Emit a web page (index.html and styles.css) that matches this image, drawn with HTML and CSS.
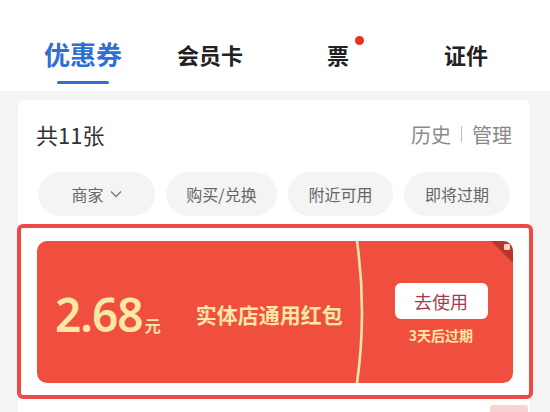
FILE: index.html
```html
<!DOCTYPE html>
<html lang="zh-CN">
<head>
    <meta charset="UTF-8">
    <meta name="viewport" content="width=device-width, initial-scale=1.0">
    <title>卡包</title>
    <link rel="stylesheet" href="styles.css">
</head>
<body>

    <!-- Top tabs -->
    <div class="tabs">
        <div class="tab active">优惠券</div>
        <div class="tab tab-member">会员卡</div>
        <div class="tab tab-ticket">票<span class="dot"></span></div>
        <div class="tab tab-cert">证件</div>
    </div>

    <div class="panel">
        <div class="panel-head">
            <div class="count">共11张</div>
            <div class="links">历史<span class="sep"></span>管理</div>
        </div>

        <div class="chips">
            <div class="chip chip-shop">商家
                <svg class="caret" width="12" height="8" viewBox="0 0 12 8"><path d="M1 1.5 L6 6.5 L11 1.5" fill="none" stroke="#777" stroke-width="1.3"/></svg>
            </div>
            <div class="chip chip-buy">购买/兑换</div>
            <div class="chip chip-near">附近可用</div>
            <div class="chip chip-exp">即将过期</div>
        </div>

        <!-- highlighted coupon -->
        <div class="mark">
            <div class="coupon">
                <div class="coupon-main">
                    <div class="amount">2.68<span class="unit">元</span></div>
                    <div class="coupon-name">实体店通用红包</div>
                </div>
                <svg class="cut" width="14" height="142" viewBox="0 0 14 142">
                    <path d="M2 0 Q12 71 2 142" fill="none" stroke="#fbe7a6" stroke-width="2.6"/>
                </svg>
                <div class="coupon-side">
                    <div class="use-btn">去使用</div>
                    <div class="expire">3天后过期</div>
                </div>
                <div class="corner">
                    <svg width="8" height="8" viewBox="0 0 8 8"><rect x="1" y="1" width="6" height="6" rx="1" fill="#f6d6c8"/></svg>
                </div>
            </div>
        </div>
    </div>

    <div class="peek"></div>

</body>
</html>
```

FILE: styles.css
```css
body {
    margin: 0;
    width: 550px;
    height: 412px;
    overflow: hidden;
    background-color: #f4f4f4;
    font-family: "Noto Sans CJK SC", "Noto Sans", sans-serif;
}

.tabs {
    display: flex;
    align-items: flex-start;
    height: 91px;
    box-sizing: border-box;
    padding-top: 39px;
    background-color: #fff;
    position: relative;
}

.tab {
    position: relative;
    font-size: 22px;
    font-weight: bold;
    color: #222;
    line-height: 30px;
}

.tab.active {
    margin-left: 44px;
    font-size: 26px;
    color: #2f6fd3;
}

.tab.active::after {
    content: "";
    position: absolute;
    left: 13px;
    right: 13px;
    bottom: -15px;
    height: 3px;
    border-radius: 2px;
    background-color: #2f6fd3;
}

.tab-member {
    margin-left: 55px;
}

.tab-ticket {
    margin-left: 84px;
}

.tab-cert {
    margin-left: 95px;
}

.dot {
    position: absolute;
    top: -3px;
    right: -15px;
    width: 9px;
    height: 9px;
    border-radius: 50%;
    background-color: #e8321e;
}

.panel {
    margin: 9px 20px 0 18px;
    background-color: #fff;
    border-radius: 6px;
    padding: 17px 0 0 0;
    height: 300px;
}

.panel-head {
    display: flex;
    justify-content: space-between;
    align-items: center;
    padding: 0 18px;
    height: 34px;
}

.count {
    font-size: 22px;
    color: #333;
}

.links {
    display: flex;
    align-items: center;
    font-size: 20px;
    color: #8a8a8a;
}

.sep {
    display: inline-block;
    width: 1px;
    height: 16px;
    margin: 0 10px;
    background-color: #bbb;
}

.chips {
    display: flex;
    gap: 11px;
    padding: 0 19px 0 20px;
    margin-top: 21px;
}

.chip {
    display: flex;
    align-items: center;
    justify-content: center;
    height: 44px;
    border-radius: 22px;
    background-color: #f4f4f4;
    font-size: 16px;
    color: #666;
}

.chip-shop {
    width: 117px;
}

.caret {
    margin-left: 6px;
}

.chip-buy {
    width: 111px;
}

.chip-near {
    width: 105px;
}

.chip-exp {
    width: 106px;
}

.mark {
    margin: 8px -3px 0 -1px;
    border: 4px solid #ee4a4a;
    border-radius: 6px;
    padding: 13px 16px 12px 16px;
}

.coupon {
    position: relative;
    display: flex;
    height: 142px;
    border-radius: 10px;
    background-color: #f04e3f;
    color: #fbe7a6;
    overflow: hidden;
}

.coupon-main {
    display: flex;
    align-items: center;
    width: 300px;
    padding-left: 18px;
}

.amount {
    font-family: "Noto Sans", sans-serif;
    font-size: 46px;
    font-weight: 600;
    letter-spacing: -1px;
    line-height: 1;
    margin-top: 4px;
}

.unit {
    font-family: "Noto Sans CJK SC", sans-serif;
    font-size: 16px;
    margin-left: 2px;
}

.coupon-name {
    margin-left: 36px;
    font-size: 21px;
    font-weight: bold;
    margin-top: 4px;
}

.cut {
    flex: none;
}

.coupon-side {
    flex: 1;
    display: flex;
    flex-direction: column;
    align-items: center;
    justify-content: center;
    padding-top: 4px;
}

.use-btn {
    width: 93px;
    height: 36px;
    line-height: 36px;
    text-align: center;
    border-radius: 6px;
    background-color: #fff;
    color: #a93a4c;
    font-size: 18px;
}

.expire {
    margin-top: 6px;
    font-size: 14px;
    font-weight: bold;
}

.corner {
    position: absolute;
    top: 0;
    right: 0;
    width: 0;
    height: 0;
    border-top: 22px solid #b8372c;
    border-left: 22px solid transparent;
}

.corner svg {
    position: absolute;
    top: -20px;
    right: 2px;
}

.peek {
    position: absolute;
    left: 490px;
    top: 405px;
    width: 38px;
    height: 7px;
    background-color: #f9d2d2;
    border-radius: 3px 3px 0 0;
}
```
